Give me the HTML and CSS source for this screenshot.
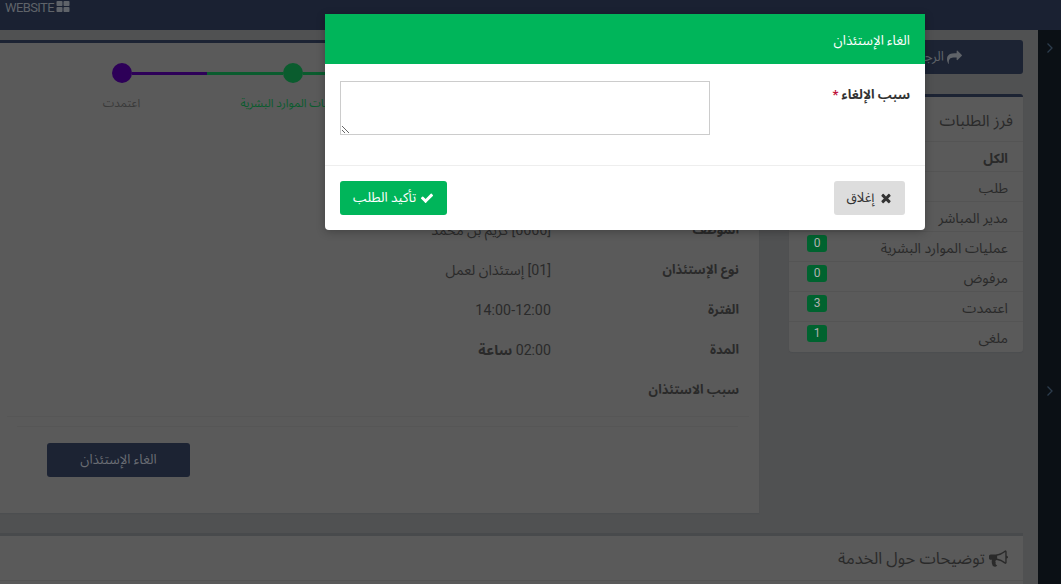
FILE: index.html
```html
<!DOCTYPE html>
<html lang="ar" dir="rtl">
<head>
<meta charset="utf-8">
<title>الغاء الإستئذان</title>
<link rel="stylesheet" href="styles.css">
</head>
<body>
<header class="topbar">
  <div class="brand">WEBSITE
    <svg class="brand-icon" viewBox="0 0 1792 1792"><path d="M832 1024v384q0 52-38 90t-90 38h-512q-52 0-90-38t-38-90v-384q0-52 38-90t90-38h512q52 0 90 38t38 90zm0-768v384q0 52-38 90t-90 38h-512q-52 0-90-38t-38-90v-384q0-52 38-90t90-38h512q52 0 90 38t38 90zm896 768v384q0 52-38 90t-90 38h-512q-52 0-90-38t-38-90v-384q0-52 38-90t90-38h512q52 0 90 38t38 90zm0-768v384q0 52-38 90t-90 38h-512q-52 0-90-38t-38-90v-384q0-52 38-90t90-38h512q52 0 90 38t38 90z"/></svg>
  </div>
</header>
<div class="shell">
  <aside class="rail">
    <svg class="chev" viewBox="0 0 8 12"><path d="M1.500 1.500 6 6l-4.500 4.500"/></svg>
    <svg class="chev" viewBox="0 0 8 12"><path d="M1.500 1.500 6 6l-4.500 4.500"/></svg>
  </aside>
  <main class="content">
    <div class="columns">
      <div class="side">
        <a class="back"><svg class="ico-share" viewBox="0 0 1792 1792"><path d="M1792 640q0 26-19 45l-512 512q-19 19-45 19t-45-19-19-45v-256h-224q-98 0-175.500 6t-154 21.500-133 42.500-105.500 69.500-80 101-48.500 138.500-17.500 181q0 55 5 123 0 6 2.500 23.500t2.500 26.500q0 15-8.500 25t-23.500 10q-16 0-28-17-7-9-13-22t-13.500-30-10.500-24q-127-285-127-451 0-199 53-333 162-403 875-403h224v-256q0-26 19-45t45-19 45 19l512 512q19 19 19 45z"/></svg> الرجوع</a>
        <section class="filter">
          <h3 class="filter-title">فرز الطلبات</h3>
          <ul class="filter-list">
            <li class="filter-item is-active"><span>الكل</span></li>
            <li class="filter-item"><span>طلب</span></li>
            <li class="filter-item"><span>مدير المباشر</span></li>
            <li class="filter-item"><span>عمليات الموارد البشرية</span><b class="badge">0</b></li>
            <li class="filter-item"><span>مرفوض</span><b class="badge">0</b></li>
            <li class="filter-item"><span>اعتمدت</span><b class="badge">3</b></li>
            <li class="filter-item"><span>ملغى</span><b class="badge">1</b></li>
          </ul>
        </section>
      </div>
      <section class="panel">
        <div class="stepper">
          <div class="step"><div class="track"><i class="seg seg-none"></i><i class="dot green"></i><i class="seg green"></i></div><p class="step-label done">طلب</p></div>
          <div class="step"><div class="track"><i class="seg green"></i><i class="dot green"></i><i class="seg green"></i></div><p class="step-label done">مدير المباشر</p></div>
          <div class="step"><div class="track"><i class="seg green"></i><i class="dot green"></i><i class="seg green"></i></div><p class="step-label done">عمليات الموارد البشرية</p></div>
          <div class="step"><div class="track"><i class="seg purple"></i><i class="dot purple"></i><i class="seg seg-none"></i></div><p class="step-label">اعتمدت</p></div>
        </div>
        <dl class="details">
          <div class="row"><dt>الموظف</dt><dd>[6666] كريم بن محمد</dd></div>
          <div class="row"><dt>نوع الإستئذان</dt><dd>[01] إستئذان لعمل</dd></div>
          <div class="row"><dt>الفترة</dt><dd>14:00-12:00</dd></div>
          <div class="row"><dt>المدة</dt><dd>02:00 <b>ساعة</b></dd></div>
          <div class="row"><dt>سبب الاستئذان</dt><dd></dd></div>
        </dl>
        <hr class="rule rule-wide">
        <hr class="rule rule-narrow">
        <div class="actions"><a class="btn-cancel">الغاء الإستئذان</a></div>
      </section>
    </div>
    <section class="notes">
      <h3 class="notes-title"><svg class="ico-horn" viewBox="0 0 1792 1792"><path d="M1664 640q53 0 90.500 37.500t37.500 90.500-37.500 90.500-90.500 37.500v384q0 52-38 90t-90 38q-417-347-812-380-58 19-91 66t-31 100.500 40 92.500q-20 33-23 65.500t6 58 33.500 55 48 50 61.500 50.500q-29 58-111.500 83t-168.500 11.500-132-55.500q-7-23-29.500-87.500t-32-94.500-23-89-15-101 3.500-98.500 22-110.500h-122q-66 0-113-47t-47-113v-192q0-66 47-113t113-47h480q435 0 896-384 52 0 90 38t38 90v384zm-128 604v-954q-394 302-768 343v270q377 42 768 341z"/></svg> توضيحات حول الخدمة</h3>
    </section>
  </main>
</div>

<div class="modal" role="dialog">
  <div class="modal-head">الغاء الإستئذان</div>
  <div class="modal-body">
    <label class="field-label">سبب الإلغاء <em>*</em></label>
    <textarea class="field-input"></textarea>
  </div>
  <div class="modal-foot">
    <button class="btn btn-close"><svg class="ico" viewBox="0 0 1792 1792"><path d="M1490 1322q0 40-28 68l-136 136q-28 28-68 28t-68-28l-294-294-294 294q-28 28-68 28t-68-28l-136-136q-28-28-28-68t28-68l294-294-294-294q-28-28-28-68t28-68l136-136q28-28 68-28t68 28l294 294 294-294q28-28 68-28t68 28l136 136q28 28 28 68t-28 68l-294 294 294 294q28 28 28 68z"/></svg> إغلاق</button>
    <button class="btn btn-ok"><svg class="ico" viewBox="0 0 1792 1792"><path d="M1671 566q0 40-28 68l-724 724-136 136q-28 28-68 28t-68-28l-136-136-362-362q-28-28-28-68t28-68l136-136q28-28 68-28t68 28l294 295 656-657q28-28 68-28t68 28l136 136q28 28 28 68z"/></svg> تأكيد الطلب</button>
  </div>
</div>
</body>
</html>
```
FILE: styles.css
```css
* { box-sizing: border-box; }
html, body { margin: 0; height: 100%; }
body {
  height: 584px;
  overflow: hidden;
  background: #505152;
  color: #2a2a2a;
  font-family: "Roboto", "Noto Sans Arabic", "Noto Kufi Arabic", "DejaVu Sans", sans-serif;
  font-size: 14.2px;
  line-height: 20px;
}
.topbar { height: 30px; background: #1a2132; direction: ltr; padding: 0 5px; }
.brand { display: flex; align-items: flex-start; gap: 2px; color: #5f6369; font-family: "Roboto", sans-serif; font-size: 13px; letter-spacing: -.6px; line-height: 15px; }
.brand-icon { width: 14px; height: 14px; fill: #5f6369; }
.shell { display: flex; height: 554px; }
.rail { flex: 0 0 23px; background: #0b1015; display: flex; flex-direction: column; align-items: center; padding-top: 12px; gap: 331px; }
.chev { width: 8px; height: 12px; fill: none; stroke: #2c3c4c; stroke-width: 1.300; }
.content { flex: 1; padding-right: 15px; min-width: 0; }
.columns { display: flex; gap: 30px; height: 483px; padding-top: 10px; }
.side { flex: 0 0 234px; }
.back { display: flex; align-items: center; gap: 3px; height: 34px; padding: 0 61px; background: #1c2333; border-radius: 3px; color: #5f6369; font-size: 13.3px; }
.ico-share { width: 15px; height: 15px; fill: #5f6369; }
.filter { margin-top: 20px; background: #5a5a5a; border-top: 3px solid #1c2333; border-radius: 3px; box-shadow: 0 1px 1px #4c4e50; }
.filter-title { margin: 0; padding: 0 10px 0 12px; height: 45px; line-height: 47px; font-size: 16px; font-weight: 400; border-bottom: 1px solid #545454; }
.filter-list { list-style: none; margin: 0; padding: 0; }
.filter-item { height: 30px; padding: 0 15px; display: flex; justify-content: space-between; align-items: flex-start; line-height: 33px; border-bottom: 1px solid #545454; }
.filter-item:last-child { border-bottom: 0; }
.filter-item.is-active { font-weight: 700; font-size: 13.3px; }
.badge { width: 20px; height: 17px; margin: 3px 0 0 3px; background: #00632f; color: #b0b0b0; border-radius: 3px; font: 400 12px/17px "Liberation Sans Narrow", "Roboto", sans-serif; text-align: center; }
.panel { flex: 1; min-width: 0; background: #5a5a5a; border-top: 3px solid #1c2333; box-shadow: 0 1px 1px #4c4e50; }
.stepper { display: flex; padding: 20px 39px 0 0; }
.step { flex: 0 0 171px; text-align: center; }
.track { display: flex; align-items: center; height: 20px; }
.seg { flex: 1; height: 3px; }
.seg-none { background: transparent; }
.dot { flex: 0 0 20px; height: 20px; border-radius: 50%; }
.green { background: #0a5c2e; }
.purple { background: #2d0058; }
.step-label { margin: 10px 0 0; font-size: 11.600px; line-height: 20px; color: #3a3a3a; white-space: nowrap; }
.step-label.done { color: #0a5c2e; }
.details { margin: 97px 20px 0 0; }
.row { display: flex; height: 40px; align-items: center; margin: 0; }
.row dt { flex: 0 0 188px; font-weight: 700; font-size: 13px; }
.row dd { margin: 0; letter-spacing: .1px; }
.rule { border: 0; border-top: 1px solid #565656; margin: 0; }
.rule-wide { margin: 6px 10px 0 7px; }
.rule-narrow { margin: 9px 21px 0 17px; }
.actions { direction: ltr; padding: 16px 0 0 47px; }
.btn-cancel { display: block; width: 143px; height: 34px; line-height: 34px; background: #1c2333; border-radius: 3px; color: #6a6d73; text-align: center; font-size: 13.3px; }
.notes { margin-top: 20px; height: 60px; background: #5a5a5a; border-top: 3px solid #484a4c; }
.notes-title { margin: 0; padding: 0 15px; height: 45px; line-height: 45px; font-size: 16.500px; font-weight: 400; border-bottom: 1px solid #545454; }
.ico-horn { width: 19px; height: 19px; fill: #2a2a2a; vertical-align: -4px; }

.modal { position: absolute; left: 325px; top: 14px; width: 600px; height: 216px; background: #fff; border-radius: 0 0 4px 4px; box-shadow: 0 2px 8px rgba(0,0,0,.25); color: #333; display: flex; flex-direction: column; }
.modal-head { flex: 0 0 50px; background: #00b55a; color: #fff; padding: 17px 15px 0 0; font-size: 13.300px; line-height: 20px; }
.modal-body { flex: 1; display: flex; padding: 17px 15px 0 15px; border-bottom: 1px solid #eee; }
.field-label { flex: 1; font-weight: 700; font-size: 13px; line-height: 28px; }
.field-label em { color: #c0143c; font-style: normal; }
.field-input { flex: 0 0 370px; height: 54px; margin: 0; border: 1px solid #ccc; background: #fff; border-radius: 0; }
.modal-foot { flex: 0 0 64px; display: flex; justify-content: space-between; padding: 15px 20px 15px 15px; }
.btn { height: 34px; border: 0; border-radius: 3px; font: inherit; font-size: 13.300px; display: flex; align-items: center; gap: 4px; padding: 0 13px; }
.btn-close { background: #ddd; color: #333; padding: 0 12.500px; }
.btn-ok { background: #00b55a; color: #fff; }
.ico { width: 14px; height: 14px; fill: currentColor; }
```
